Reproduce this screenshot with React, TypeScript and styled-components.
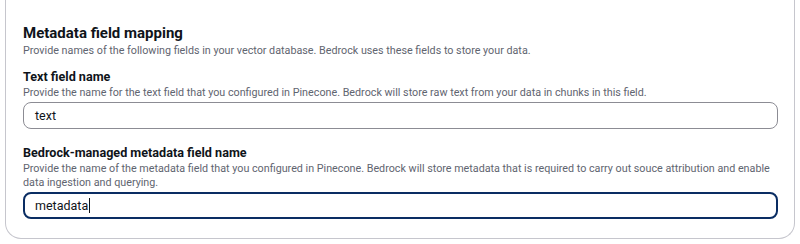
import styled, { createGlobalStyle, css } from 'styled-components';

const GlobalStyle = createGlobalStyle`
  body {
    margin: 0;
    background: #ffffff;
    font-family: Roboto, "Open Sans", sans-serif;
    color: #0f141a;
  }
`;

const Card = styled.section`
  box-sizing: border-box;
  width: 790px;
  height: 239px;
  margin: 0 5px;
  padding: 23px 16px 0 17px;

  border: 1px solid #c6c6cd;
  border-top: none;
  border-radius: 0 0 16px 16px;
`;

const Title = styled.h2`
  margin: 0;

  font-size: 15px;
  line-height: 21px;
  font-weight: 700;
`;

const Description = styled.p`
  margin: 0;

  font-size: 10.75px;
  line-height: 14px;
  color: #5f6570;
`;

const Field = styled.div`
  display: flex;
  flex-direction: column;

  margin-top: 10px;

  & + & {
    margin-top: 15px;
  }
`;

const Label = styled.label`
  margin-bottom: 1px;

  font-size: 12.6px;
  line-height: 17px;
  font-weight: 700;
`;

const Input = styled.div<{ focused?: boolean }>`
  box-sizing: border-box;
  display: flex;
  align-items: center;

  height: 27px;
  margin-top: 2px;
  padding: 0 11px;

  font-size: 12.5px;
  color: #0f141a;

  border: 1px solid #8c8c94;
  border-radius: 8px;

  ${(props) =>
    props.focused &&
    css`
      padding: 0 10px;
      border: 2px solid #0a2d63;
    `}
`;

const Caret = styled.span`
  display: inline-block;
  width: 1px;
  height: 15px;
  margin-left: 1px;

  background: #0f141a;
`;

interface IMappingFieldProps {
  label: string;
  hint: string;
  value: string;
  focused?: boolean;
}

const MappingField = ({ label, hint, value, focused }: IMappingFieldProps) => (
  <Field>
    <Label>{label}</Label>
    <Description>{hint}</Description>
    <Input focused={focused}>
      {value}
      {focused && <Caret />}
    </Input>
  </Field>
);

export default function App() {
  return (
    <>
      <GlobalStyle />
      <Card>
        <Title>Metadata field mapping</Title>
        <Description>
          Provide names of the following fields in your vector database. Bedrock uses these fields to store your data.
        </Description>
        <MappingField
          label="Text field name"
          hint="Provide the name for the text field that you configured in Pinecone. Bedrock will store raw text from your data in chunks in this field."
          value="text"
        />
        <MappingField
          label="Bedrock-managed metadata field name"
          hint="Provide the name of the metadata field that you configured in Pinecone. Bedrock will store metadata that is required to carry out souce attribution and enable data ingestion and querying."
          value="metadata"
          focused
        />
      </Card>
    </>
  );
}
